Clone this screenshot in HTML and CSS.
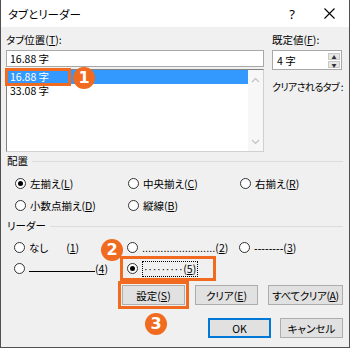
FILE: index.html
```html
<!DOCTYPE html>
<html lang="ja">

<head>
    <meta charset="UTF-8">
    <title>タブとリーダー</title>
    <link rel="stylesheet" href="styles.css">
</head>

<body>

    <div class="dialog">
        <div class="titlebar">
            <span class="title">タブとリーダー</span>
            <span class="help">?</span>
            <svg class="close" width="11" height="11" viewBox="0 0 11 11">
                <path d="M0.5 0.5 L10.5 10.5 M10.5 0.5 L0.5 10.5" stroke="#000" stroke-width="1.1" fill="none" />
            </svg>
        </div>

        <div class="content">
            <div class="top">
                <div class="tabpos">
                    <div class="label">タブ位置(<u>T</u>):</div>
                    <div class="edit">16.88 字</div>
                    <div class="list">
                        <div class="items">
                            <div class="item selected">16.88 字</div>
                            <div class="item">33.08 字</div>
                        </div>
                        <div class="scroll">
                            <svg width="9" height="6" viewBox="0 0 9 6"><path d="M1 5 L4.5 1.5 L8 5" stroke="#c2c2c2" stroke-width="1.2" fill="none" /></svg>
                            <svg width="9" height="6" viewBox="0 0 9 6"><path d="M1 1 L4.5 4.5 L8 1" stroke="#c2c2c2" stroke-width="1.2" fill="none" /></svg>
                        </div>
                    </div>
                    <span class="mark mark-row"></span>
                    <span class="badge badge-1">1</span>
                </div>

                <div class="defaults">
                    <div class="label">既定値(<u>F</u>):</div>
                    <div class="spin">
                        <span>4 字</span>
                        <div class="spin-btns">
                            <span class="spin-btn">▲</span>
                            <span class="spin-btn">▼</span>
                        </div>
                    </div>
                    <div class="label clear-label">クリアされるタブ :</div>
                </div>
            </div>

            <div class="group-title"><span>配置</span></div>
            <div class="options align-opts">
                <div class="opt"><span class="radio checked"></span>左揃え(<u>L</u>)</div>
                <div class="opt"><span class="radio"></span>中央揃え(<u>C</u>)</div>
                <div class="opt"><span class="radio"></span>右揃え(<u>R</u>)</div>
                <div class="opt"><span class="radio"></span>小数点揃え(<u>D</u>)</div>
                <div class="opt"><span class="radio"></span>縦線(<u>B</u>)</div>
            </div>

            <div class="group-title"><span>リーダー</span></div>
            <div class="options leader-opts">
                <div class="opt"><span class="radio"></span>なし<span class="num-1">(<u>1</u>)</span></div>
                <div class="opt"><span class="radio"></span><span class="dots">........................</span>(<u>2</u>)</div>
                <div class="opt"><span class="radio"></span><span class="dots">--------</span>(<u>3</u>)</div>
                <div class="opt"><span class="radio"></span><span class="line"></span>(<u>4</u>)</div>
                <div class="opt marked">
                    <span class="radio checked"></span><span class="focus"><span class="dots mid">·········</span>(<u>5</u>)</span>
                    <span class="mark mark-opt"></span>
                    <span class="badge badge-2">2</span>
                </div>
            </div>

            <div class="buttons">
                <div class="btn btn-set">設定(<u>S</u>)<span class="badge badge-3">3</span></div>
                <div class="btn">クリア(<u>E</u>)</div>
                <div class="btn btn-wide">すべてクリア(<u>A</u>)</div>
            </div>

            <div class="buttons footer">
                <div class="btn btn-ok">OK</div>
                <div class="btn">キャンセル</div>
            </div>
        </div>
    </div>

</body>

</html>
```

FILE: styles.css
```css
* {
    box-sizing: border-box;
}

body {
    margin: 0;
    font-family: "Noto Sans CJK JP", "Noto Sans", sans-serif;
    font-size: 10.5px;
    font-feature-settings: "palt";
    color: #000;
    background: #fff;
    white-space: nowrap;
}

u {
    text-decoration: underline;
    text-underline-offset: 1px;
}

.dialog {
    width: 350px;
    height: 348px;
    border: 1px solid #505050;
    border-top: none;
    background: #f0f0f0;
}

.titlebar {
    height: 27px;
    background: #fff;
    display: flex;
    align-items: center;
    padding-left: 7px;
}

.title {
    font-size: 11.5px;
    flex: 1;
}

.help {
    font-size: 13px;
    font-family: "Noto Sans", sans-serif;
    margin-right: 29px;
}

.close {
    margin-right: 14px;
}

.content {
    padding: 0 6px 0 5px;
}

.top {
    display: flex;
    gap: 8px;
    padding-top: 5px;
}

.label {
    height: 16px;
    line-height: 16px;
}

.tabpos {
    width: 258px;
    position: relative;
}

.edit {
    margin-top: 2px;
    height: 17px;
    line-height: 15px;
    border: 1px solid #a8a8a8;
    background: #fff;
    padding-left: 3px;
}

.list {
    margin-top: 2px;
    height: 83px;
    border: 1px solid #828282;
    border-right-color: #d0d0d0;
    border-bottom-color: #d0d0d0;
    background: #fff;
    display: flex;
}

.items {
    flex: 1;
}

.item {
    height: 14px;
    line-height: 14px;
    padding-left: 3px;
}

.item.selected {
    background: #3399ff;
    color: #fff;
}

.scroll {
    width: 15px;
    background: #f7f7f7;
    display: flex;
    flex-direction: column;
    justify-content: space-between;
    align-items: center;
    padding: 7px 0 6px;
}

.mark {
    position: absolute;
    border: 3px solid #f06a1f;
}

.mark-row {
    left: -1px;
    top: 36px;
    width: 66px;
    height: 18px;
}

.badge {
    position: absolute;
    width: 22px;
    height: 22px;
    border-radius: 50%;
    background: #f06a1f;
    color: #fff;
    font-family: "DejaVu Sans", sans-serif;
    font-weight: bold;
    font-size: 16px;
    line-height: 22px;
    text-align: center;
}

.badge-1 {
    left: 67px;
    top: 35px;
}

.defaults {
    width: 70px;
}

.spin {
    margin-top: 2px;
    height: 20px;
    border: 1px solid #a8a8a8;
    background: #fff;
    display: flex;
    align-items: center;
    justify-content: space-between;
    padding-left: 4px;
    padding-right: 1px;
}

.spin-btns {
    display: flex;
    flex-direction: column;
    gap: 1px;
}

.spin-btn {
    width: 12px;
    height: 7px;
    background: #e6e6e6;
    border: 1px solid #c8c8c8;
    font-size: 5px;
    line-height: 5px;
    text-align: center;
    color: #333;
}

.clear-label {
    margin-top: 9px;
    font-size: 10px;
    letter-spacing: -0.6px;
}

.group-title {
    display: flex;
    align-items: center;
    gap: 4px;
    height: 16px;
    line-height: 16px;
    margin-top: 1px;
    padding-left: 1px;
}

.group-title::after {
    content: "";
    flex: 1;
    border-top: 1px solid #dcdcdc;
}

.options {
    display: grid;
    grid-template-columns: 113px 112px 1fr;
    padding-left: 9px;
    margin-top: 3px;
}

.align-opts {
    grid-auto-rows: 22px;
}

.align-opts + .group-title {
    margin-top: 2px;
}

.leader-opts {
    grid-auto-rows: 21px;
    padding-left: 8px;
}

.opt {
    display: flex;
    align-items: center;
    position: relative;
}

.radio {
    width: 11px;
    height: 11px;
    border: 1px solid #333;
    border-radius: 50%;
    background: #fff;
    margin-right: 4px;
    display: flex;
    align-items: center;
    justify-content: center;
}

.radio.checked::after {
    content: "";
    width: 5px;
    height: 5px;
    border-radius: 50%;
    background: #000;
}

.dots {
    font-family: "Liberation Sans", sans-serif;
    font-size: 11px;
}

.dots.mid {
    letter-spacing: 0.7px;
}

.num-1 {
    margin-left: 18px;
}

.line {
    width: 66px;
    height: 8px;
    border-bottom: 1px solid #000;
    margin-bottom: 1px;
}

.focus {
    border: 1px dotted #000;
    padding: 0 1px;
    line-height: 13px;
}

.mark-opt {
    left: -7px;
    top: -2px;
    width: 96px;
    height: 25px;
}

.badge-2 {
    left: -26px;
    top: -19px;
}

.buttons {
    display: flex;
    justify-content: flex-end;
    gap: 10px;
    margin-top: 6px;
}

.footer {
    gap: 9px;
    margin-top: 13px;
}

.btn {
    width: 63px;
    height: 20px;
    background: #e1e1e1;
    border: 1px solid #adadad;
    display: flex;
    align-items: center;
    justify-content: center;
    position: relative;
}

.btn-wide {
    width: 75px;
    letter-spacing: -0.4px;
}

.btn-set {
    outline: 3px solid #f06a1f;
    outline-offset: 1px;
}

.btn-ok {
    border: 2px solid #0078d7;
}

.badge-3 {
    left: 22px;
    top: 27px;
}
```
